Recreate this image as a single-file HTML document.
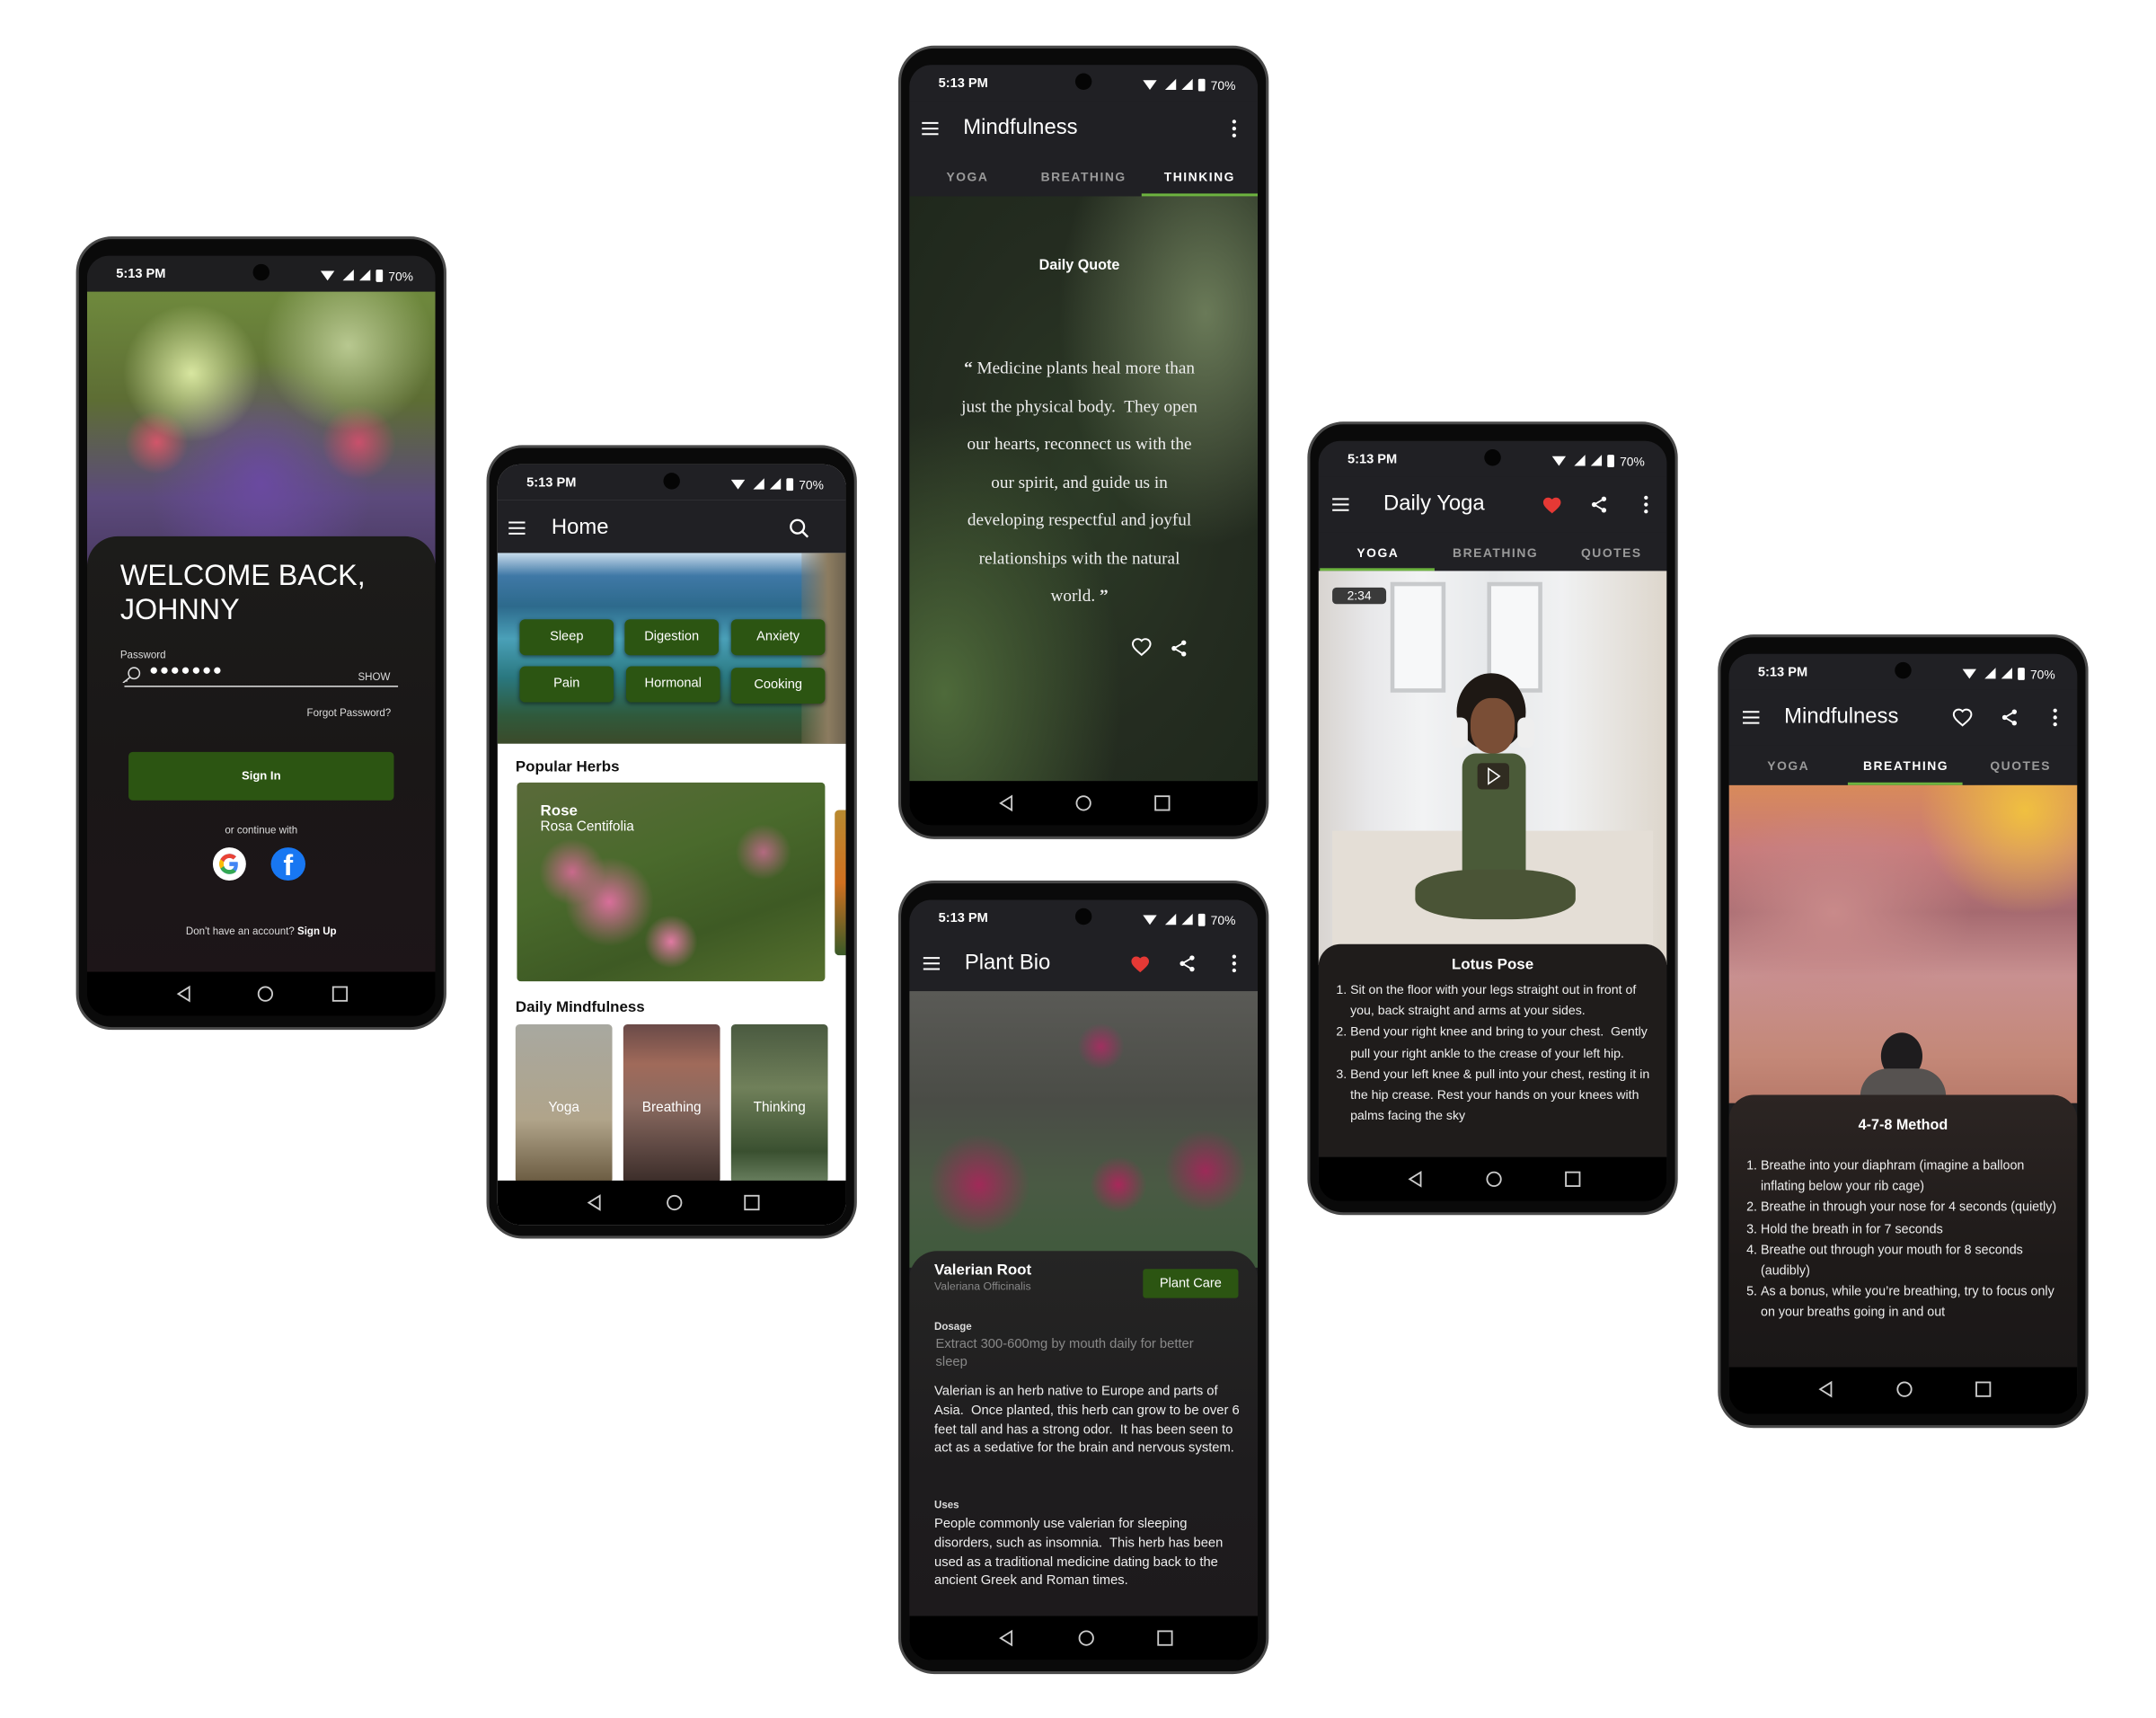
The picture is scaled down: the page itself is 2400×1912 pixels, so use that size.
<!DOCTYPE html>
<html><head><meta charset="utf-8">
<style>
*{margin:0;padding:0;box-sizing:border-box}
html,body{width:2400px;height:1912px;background:#fff;overflow:hidden;font-family:"Liberation Sans",sans-serif}
#w{position:absolute;left:0;top:0;width:1560px;height:1243px;transform:scale(1.53846);transform-origin:0 0}
.ph{position:absolute;width:268px;height:574px;background:#0a0a0a;border:2px solid #4a4a4a;border-radius:26px}
.sc{position:absolute;left:6px;right:6px;top:12px;bottom:8px;border-radius:16px;overflow:hidden;background:#1e1e21;color:#fff}
.sb{position:absolute;left:0;top:0;width:252px;height:26px;background:#202024}
.sb b{position:absolute;left:21px;top:8px;font-size:9.5px;font-weight:bold}
.cam{position:absolute;left:120px;top:6px;width:12px;height:12px;border-radius:50%;background:#050505}
.si{position:absolute;right:9px;top:7px}
.nav{position:absolute;left:0;bottom:0;width:252px;height:32px;background:#000}
.nav svg{position:absolute;left:0;top:0}
.ab{position:absolute;left:0;top:26px;width:252px;height:40px;background:#202024}
.ab .t{position:absolute;top:11px;font-size:15.5px;color:#fff}
.ab svg{position:absolute}
.tabs{position:absolute;left:0;top:66px;width:252px;height:29px;background:#202024;font-size:9px;letter-spacing:1px;color:#9a9a9a;font-weight:bold}
.tabs span{position:absolute;top:10px;transform:translateX(-50%)}
.tabs .on{color:#fff}
.ul{position:absolute;bottom:0;height:2px;width:84px;background:#6db33f}
.abs{position:absolute}
.btn{position:absolute;width:68px;height:26px;background:#2c5512;border-radius:4px;color:#fff;font-size:9.5px;text-align:center;line-height:26px;box-shadow:0 1px 3px rgba(0,0,0,.5)}
ol{position:absolute;padding-left:20px;color:#eee}
</style></head><body><div id="w">

<!-- PHONE 1 LOGIN -->
<div class="ph" style="left:55px;top:171px">
<div class="sc" style="background:#161315">
<div class="abs" style="left:0;top:25px;width:252px;height:200px;background:radial-gradient(circle at 30% 30%,#d8e6a0 0,transparent 22%),radial-gradient(circle at 75% 20%,#b8c890 0,transparent 25%),radial-gradient(circle at 20% 55%,#d2566a 0,transparent 10%),radial-gradient(circle at 78% 55%,#c9506c 0,transparent 12%),radial-gradient(ellipse at 50% 70%,#6a4aa0 0,transparent 45%),linear-gradient(180deg,#6f8a3d 0%,#5d6d34 40%,#5c4a7c 75%,#4a3a63 100%)"></div>
<div class="abs" style="left:0;top:203px;width:252px;height:320px;border-radius:22px 22px 0 0;background:linear-gradient(180deg,#1c1c1a 0%,#1a1717 50%,#1d1518 100%)"></div>
<div class="sb" style="background:#1e1e20"><b>5:13 PM</b><i class="cam"></i><span class="si"><svg width="76" height="11"><path d="M2 2h10l-5 7z" fill="#fff"/><path d="M18 9l8-8v8z" fill="#fff"/><path d="M30 9l8-8v8z" fill="#fff"/><rect x="42" y="1" width="5" height="9" rx="1" fill="#fff"/><text x="51" y="9" font-size="9" fill="#fff" font-family="Liberation Sans">70%</text></svg></span></div>
<div class="abs" style="left:24px;top:219px;font-size:21px;line-height:25px;color:#fff">WELCOME BACK,<br>JOHNNY</div>
<div class="abs" style="left:24px;top:284px;font-size:7.5px;color:#ddd">Password</div>
<svg class="abs" style="left:24px;top:297px" width="16" height="12"><circle cx="10" cy="5" r="4" fill="none" stroke="#ddd" stroke-width="1"/><path d="M7 8l-5 4M4 10l1 1" stroke="#ddd" stroke-width="1"/></svg>
<div class="abs" style="left:45px;top:294px;font-size:11px;letter-spacing:1px;color:#fff">●●●●●●●</div>
<div class="abs" style="left:196px;top:300px;font-size:7.5px;color:#ddd">SHOW</div>
<div class="abs" style="left:27px;top:311px;width:198px;height:1px;background:#ddd"></div>
<div class="abs" style="left:159px;top:326px;font-size:7.5px;color:#ddd">Forgot Password?</div>
<div class="abs" style="left:30px;top:359px;width:192px;height:35px;border-radius:3px;background:#2c5512;color:#fff;font-size:8.5px;font-weight:bold;text-align:center;line-height:35px">Sign In</div>
<div class="abs" style="left:0;width:252px;top:411px;text-align:center;font-size:7.5px;color:#ddd">or continue with</div>
<div class="abs" style="left:91px;top:428px;width:24px;height:24px;border-radius:50%;background:#fff"><svg width="24" height="24" viewBox="0 0 24 24"><path d="M18 10.5h-6v3h3.4c-.5 1.8-1.8 2.8-3.4 2.8a4.3 4.3 0 010-8.6c1.1 0 2 .4 2.8 1l2.1-2.1A7.3 7.3 0 0012 4.7a7.3 7.3 0 100 14.6c4 0 6.8-2.9 6-8.8z" fill="#4285f4"/><path d="M5.5 8.6l2.5 1.9A4.3 4.3 0 0112 7.7c1.1 0 2 .4 2.8 1l2.1-2.1A7.3 7.3 0 005.5 8.6z" fill="#ea4335"/><path d="M5.5 15.4A7.3 7.3 0 0012 19.3c1.9 0 3.6-.6 4.9-1.8l-2.3-1.9c-.7.5-1.6.7-2.6.7a4.3 4.3 0 01-4-2.7z" fill="#34a853"/><path d="M5.5 8.6a7.3 7.3 0 000 6.8L8 13.5a4.3 4.3 0 010-3z" fill="#fbbc05"/></svg></div>
<div class="abs" style="left:133px;top:428px;width:25px;height:24px;border-radius:50%;background:#1877f2;color:#fff;font-weight:bold;font-size:21px;text-align:center;line-height:28px;overflow:hidden">f</div>
<div class="abs" style="left:0;width:252px;top:484px;text-align:center;font-size:7.5px;color:#ddd">Don't have an account? <b style="color:#fff">Sign Up</b></div>
<div class="nav"><svg width="252" height="32"><path d="M74 11v10l-8-5z" fill="none" stroke="#ccc" stroke-width="1.2"/><circle cx="129" cy="16" r="5" fill="none" stroke="#ccc" stroke-width="1.2"/><rect x="178" y="11" width="10" height="10" fill="none" stroke="#ccc" stroke-width="1.2"/></svg></div>
</div></div>

<!-- PHONE 2 HOME -->
<div class="ph" style="left:352px;top:322px">
<div class="sc" style="background:#fff">
<div class="sb"><b>5:13 PM</b><i class="cam"></i><span class="si"><svg width="76" height="11"><path d="M2 2h10l-5 7z" fill="#fff"/><path d="M18 9l8-8v8z" fill="#fff"/><path d="M30 9l8-8v8z" fill="#fff"/><rect x="42" y="1" width="5" height="9" rx="1" fill="#fff"/><text x="51" y="9" font-size="9" fill="#fff" font-family="Liberation Sans">70%</text></svg></span></div>
<div class="ab"><svg style="left:8px;top:14px" width="12" height="12"><path d="M0 2h12M0 6h12M0 10h12" stroke="#fff" stroke-width="1.3"/></svg><span class="t" style="left:39px">Home</span><svg style="left:211px;top:13px" width="15" height="15"><circle cx="6" cy="6" r="4.8" fill="none" stroke="#fff" stroke-width="1.5"/><path d="M9.5 9.5l4 4" stroke="#fff" stroke-width="1.6"/></svg></div>
<div class="abs" style="left:0;top:64px;width:252px;height:138px;background:linear-gradient(180deg,#c8dcec 0%,#3f78a6 12%,#2d6a8c 28%,#4aa0b8 45%,#2a7880 65%,#2f5a3c 85%,#3b4a2a 100%)"></div>
<div class="abs" style="left:220px;top:64px;width:32px;height:138px;background:linear-gradient(90deg,rgba(140,120,90,.3),#8c7c60 60%,#6e6350)"></div>
<div class="btn" style="left:16px;top:112px">Sleep</div><div class="btn" style="left:92px;top:112px">Digestion</div><div class="btn" style="left:169px;top:112px">Anxiety</div>
<div class="btn" style="left:16px;top:146px">Pain</div><div class="btn" style="left:93px;top:146px">Hormonal</div><div class="btn" style="left:169px;top:147px">Cooking</div>
<div class="abs" style="left:13px;top:213px;font-size:11px;font-weight:bold;color:#111">Popular Herbs</div>
<div class="abs" style="left:14px;top:230px;width:223px;height:144px;border-radius:3px;background:radial-gradient(circle at 30% 60%,#d86f9a 0,transparent 18%),radial-gradient(circle at 50% 80%,#e07aa2 0,transparent 12%),radial-gradient(circle at 18% 45%,#c96a8c 0,transparent 12%),radial-gradient(circle at 80% 35%,#b36a80 0,transparent 10%),linear-gradient(160deg,#5a6a3a 0%,#4a6a2c 40%,#3e5a24 70%,#56702e 100%)"></div>
<div class="abs" style="left:31px;top:245px;font-size:11px;font-weight:bold;color:#fff">Rose</div>
<div class="abs" style="left:31px;top:257px;font-size:10px;color:#fff">Rosa Centifolia</div>
<div class="abs" style="left:244px;top:250px;width:8px;height:105px;border-radius:3px 0 0 3px;background:linear-gradient(180deg,#b88a30,#d07020 50%,#3a5a28)"></div>
<div class="abs" style="left:13px;top:387px;font-size:11px;font-weight:bold;color:#111">Daily Mindfulness</div>
<div class="abs" style="left:13px;top:405px;width:70px;height:115px;border-radius:3px;background:linear-gradient(180deg,#a8a8a0,#b0a48a 60%,#6a5a40)"></div>
<div class="abs" style="left:91px;top:405px;width:70px;height:115px;border-radius:3px;background:linear-gradient(180deg,#6a4a48,#a06a5a 25%,#8a6a60 50%,#5a4540 80%,#3a2c28)"></div>
<div class="abs" style="left:169px;top:405px;width:70px;height:115px;border-radius:3px;background:linear-gradient(180deg,#4a5a40,#70805a 40%,#3a5030 80%,#6a8060)"></div>
<div class="abs" style="left:13px;width:70px;top:460px;text-align:center;font-size:10px;color:#fff">Yoga</div>
<div class="abs" style="left:91px;width:70px;top:460px;text-align:center;font-size:10px;color:#fff">Breathing</div>
<div class="abs" style="left:169px;width:70px;top:460px;text-align:center;font-size:10px;color:#fff">Thinking</div>
<div class="nav"><svg width="252" height="32"><path d="M74 11v10l-8-5z" fill="none" stroke="#ccc" stroke-width="1.2"/><circle cx="128" cy="16" r="5" fill="none" stroke="#ccc" stroke-width="1.2"/><rect x="179" y="11" width="10" height="10" fill="none" stroke="#ccc" stroke-width="1.2"/></svg></div>
</div></div>

<!-- PHONE 3 QUOTE -->
<div class="ph" style="left:650px;top:33px">
<div class="sc">
<div class="sb"><b>5:13 PM</b><i class="cam"></i><span class="si"><svg width="76" height="11"><path d="M2 2h10l-5 7z" fill="#fff"/><path d="M18 9l8-8v8z" fill="#fff"/><path d="M30 9l8-8v8z" fill="#fff"/><rect x="42" y="1" width="5" height="9" rx="1" fill="#fff"/><text x="51" y="9" font-size="9" fill="#fff" font-family="Liberation Sans">70%</text></svg></span></div>
<div class="ab"><svg style="left:9px;top:14px" width="12" height="12"><path d="M0 2h12M0 6h12M0 10h12" stroke="#fff" stroke-width="1.3"/></svg><span class="t" style="left:39px">Mindfulness</span><svg style="left:232px;top:13px" width="6" height="14"><circle cx="3" cy="2" r="1.4" fill="#fff"/><circle cx="3" cy="7" r="1.4" fill="#fff"/><circle cx="3" cy="12" r="1.4" fill="#fff"/></svg></div>
<div class="tabs"><span style="left:42px">YOGA</span><span style="left:126px">BREATHING</span><span class="on" style="left:210px">THINKING</span><i class="ul" style="left:168px"></i></div>
<div class="abs" style="left:0;top:95px;width:252px;height:423px;background:radial-gradient(ellipse at 85% 20%,#6a7a58 0,transparent 35%),radial-gradient(ellipse at 10% 85%,#4e6a3a 0,transparent 40%),radial-gradient(ellipse at 50% 50%,#2c3a26 0,#242c20 60%,#1f281c 100%)"></div>
<div class="abs" style="left:0;width:246px;top:139px;text-align:center;font-size:10.5px;font-weight:bold;color:#fff">Daily Quote</div>
<div class="abs" style="left:34px;width:178px;top:206px;text-align:center;font-family:'Liberation Serif',serif;font-size:12.5px;line-height:27.5px;color:#eee"><b>“</b> Medicine plants heal more than just the physical body.&nbsp; They open our hearts, reconnect us with the our spirit, and guide us in developing respectful and joyful relationships with the natural world. <b>”</b></div>
<svg class="abs" style="left:160px;top:414px" width="16" height="14" viewBox="0 0 24 22"><path d="M12 20l-1.5-1.3C5 14 2 11 2 7.5 2 4.5 4.5 2 7.5 2c1.7 0 3.4.8 4.5 2.1C13.1 2.8 14.8 2 16.5 2 19.5 2 22 4.5 22 7.5c0 3.5-3 6.5-8.5 11.2z" fill="none" stroke="#fff" stroke-width="2"/></svg>
<svg class="abs" style="left:188px;top:415px" width="14" height="14" viewBox="0 0 24 24"><circle cx="18" cy="5" r="3" fill="#fff"/><circle cx="6" cy="12" r="3" fill="#fff"/><circle cx="18" cy="19" r="3" fill="#fff"/><path d="M18 5L6 12l12 7" stroke="#fff" stroke-width="2" fill="none"/></svg>
<div class="nav"><svg width="252" height="32"><path d="M74 11v10l-8-5z" fill="none" stroke="#ccc" stroke-width="1.2"/><circle cx="126" cy="16" r="5" fill="none" stroke="#ccc" stroke-width="1.2"/><rect x="178" y="11" width="10" height="10" fill="none" stroke="#ccc" stroke-width="1.2"/></svg></div>
</div></div>

<!-- PHONE 4 PLANT BIO -->
<div class="ph" style="left:650px;top:637px">
<div class="sc">
<div class="sb"><b>5:13 PM</b><i class="cam"></i><span class="si"><svg width="76" height="11"><path d="M2 2h10l-5 7z" fill="#fff"/><path d="M18 9l8-8v8z" fill="#fff"/><path d="M30 9l8-8v8z" fill="#fff"/><rect x="42" y="1" width="5" height="9" rx="1" fill="#fff"/><text x="51" y="9" font-size="9" fill="#fff" font-family="Liberation Sans">70%</text></svg></span></div>
<div class="ab"><svg style="left:10px;top:14px" width="12" height="12"><path d="M0 2h12M0 6h12M0 10h12" stroke="#fff" stroke-width="1.3"/></svg><span class="t" style="left:40px">Plant Bio</span>
<svg style="left:159px;top:13px" width="16" height="14" viewBox="0 0 24 22"><path d="M12 21l-1.5-1.3C5 15 2 12 2 8.5 2 5.5 4.5 3 7.5 3c1.7 0 3.4.8 4.5 2.1C13.1 3.8 14.8 3 16.5 3 19.5 3 22 5.5 22 8.5c0 3.5-3 6.5-8.5 11.2z" fill="#e53935"/></svg>
<svg style="left:194px;top:13px" width="14" height="14" viewBox="0 0 24 24"><circle cx="18" cy="5" r="3" fill="#fff"/><circle cx="6" cy="12" r="3" fill="#fff"/><circle cx="18" cy="19" r="3" fill="#fff"/><path d="M18 5L6 12l12 7" stroke="#fff" stroke-width="2" fill="none"/></svg>
<svg style="left:232px;top:13px" width="6" height="14"><circle cx="3" cy="2" r="1.4" fill="#fff"/><circle cx="3" cy="7" r="1.4" fill="#fff"/><circle cx="3" cy="12" r="1.4" fill="#fff"/></svg></div>
<div class="abs" style="left:0;top:66px;width:252px;height:200px;background:radial-gradient(circle at 60% 70%,#a8285a 0,transparent 10%),radial-gradient(circle at 20% 70%,#a02a58 0,transparent 15%),radial-gradient(circle at 85% 65%,#9c2a58 0,transparent 12%),radial-gradient(circle at 55% 20%,#a03060 0,transparent 8%),linear-gradient(180deg,#5a5a56 0%,#4a4c46 40%,#4a5a44 70%,#3f5a3c 100%)"></div>
<div class="abs" style="left:0;top:254px;width:252px;height:270px;border-radius:20px 20px 0 0;background:linear-gradient(180deg,#252524,#1e1c1e 60%,#1d1a1c)"></div>
<div class="abs" style="left:18px;top:262px;font-size:11px;font-weight:bold">Valerian Root</div>
<div class="abs" style="left:18px;top:275px;font-size:8px;color:#888">Valeriana Officinalis</div>
<div class="abs" style="left:169px;top:267px;width:69px;height:21px;border-radius:2px;background:#2c5512;font-size:9.5px;text-align:center;line-height:21px">Plant Care</div>
<div class="abs" style="left:18px;top:304px;font-size:7.5px;font-weight:bold;color:#ddd">Dosage</div>
<div class="abs" style="left:19px;top:315px;width:200px;font-size:9.6px;line-height:13px;color:#888">Extract 300-600mg by mouth daily for better sleep</div>
<div class="abs" style="left:18px;top:349px;width:226px;font-size:9.6px;line-height:13.8px;color:#eee">Valerian is an herb native to Europe and parts of Asia.&nbsp; Once planted, this herb can grow to be over 6 feet tall and has a strong odor.&nbsp; It has been seen to act as a sedative for the brain and nervous system.</div>
<div class="abs" style="left:18px;top:433px;font-size:7.5px;font-weight:bold;color:#ddd">Uses</div>
<div class="abs" style="left:18px;top:445px;width:226px;font-size:9.6px;line-height:13.8px;color:#eee">People commonly use valerian for sleeping disorders, such as insomnia.&nbsp; This herb has been used as a traditional medicine dating back to the ancient Greek and Roman times.</div>
<div class="nav"><svg width="252" height="32"><path d="M74 11v10l-8-5z" fill="none" stroke="#ccc" stroke-width="1.2"/><circle cx="128" cy="16" r="5" fill="none" stroke="#ccc" stroke-width="1.2"/><rect x="180" y="11" width="10" height="10" fill="none" stroke="#ccc" stroke-width="1.2"/></svg></div>
</div></div>

<!-- PHONE 5 DAILY YOGA -->
<div class="ph" style="left:946px;top:305px">
<div class="sc">
<div class="sb"><b>5:13 PM</b><i class="cam"></i><span class="si"><svg width="76" height="11"><path d="M2 2h10l-5 7z" fill="#fff"/><path d="M18 9l8-8v8z" fill="#fff"/><path d="M30 9l8-8v8z" fill="#fff"/><rect x="42" y="1" width="5" height="9" rx="1" fill="#fff"/><text x="51" y="9" font-size="9" fill="#fff" font-family="Liberation Sans">70%</text></svg></span></div>
<div class="ab"><svg style="left:10px;top:14px" width="12" height="12"><path d="M0 2h12M0 6h12M0 10h12" stroke="#fff" stroke-width="1.3"/></svg><span class="t" style="left:47px">Daily Yoga</span>
<svg style="left:161px;top:13px" width="16" height="14" viewBox="0 0 24 22"><path d="M12 21l-1.5-1.3C5 15 2 12 2 8.5 2 5.5 4.5 3 7.5 3c1.7 0 3.4.8 4.5 2.1C13.1 3.8 14.8 3 16.5 3 19.5 3 22 5.5 22 8.5c0 3.5-3 6.5-8.5 11.2z" fill="#e53935"/></svg>
<svg style="left:196px;top:13px" width="14" height="14" viewBox="0 0 24 24"><circle cx="18" cy="5" r="3" fill="#fff"/><circle cx="6" cy="12" r="3" fill="#fff"/><circle cx="18" cy="19" r="3" fill="#fff"/><path d="M18 5L6 12l12 7" stroke="#fff" stroke-width="2" fill="none"/></svg>
<svg style="left:234px;top:13px" width="6" height="14"><circle cx="3" cy="2" r="1.4" fill="#fff"/><circle cx="3" cy="7" r="1.4" fill="#fff"/><circle cx="3" cy="12" r="1.4" fill="#fff"/></svg></div>
<div class="tabs" style="height:28px"><span class="on" style="left:43px">YOGA</span><span style="left:128px">BREATHING</span><span style="left:212px">QUOTES</span><i class="ul" style="left:1px;width:83px"></i></div>
<div class="abs" style="left:0;top:94px;width:252px;height:285px;background:linear-gradient(90deg,#d8d4d0 0%,#e8e8ea 15%,#f2f3f4 30%,#e6e8ea 50%,#f0f1f2 70%,#ddd6cc 100%)"></div>
<div class="abs" style="left:52px;top:102px;width:40px;height:80px;background:#f7f8f9;border:3px solid #c8cacc"></div>
<div class="abs" style="left:122px;top:102px;width:40px;height:80px;background:#f7f8f9;border:3px solid #c8cacc"></div>
<div class="abs" style="left:10px;top:282px;width:232px;height:90px;background:#e4ded6"></div>
<div class="abs" style="left:100px;top:168px;width:50px;height:56px;border-radius:50%;background:#1e1814"></div>
<div class="abs" style="left:110px;top:186px;width:32px;height:40px;border-radius:45%;background:#7a4e36"></div>
<div class="abs" style="left:96px;top:200px;width:12px;height:22px;border-radius:5px;background:#eee"></div>
<div class="abs" style="left:144px;top:200px;width:12px;height:22px;border-radius:5px;background:#eee"></div>
<div class="abs" style="left:104px;top:226px;width:46px;height:90px;border-radius:10px 10px 4px 4px;background:#4a5a38"></div>
<div class="abs" style="left:70px;top:310px;width:116px;height:36px;border-radius:40%;background:#4a5436"></div>
<div class="abs" style="left:10px;top:106px;width:39px;height:12px;border-radius:3px;background:#3a3a3a;font-size:9px;text-align:center;line-height:12px">2:34</div>
<div class="abs" style="left:115px;top:233px;width:23px;height:19px;border-radius:3px;background:rgba(40,30,25,.75)"><svg width="23" height="19"><path d="M8 4v11l8-5.5z" fill="none" stroke="#fff" stroke-width="1"/></svg></div>
<div class="abs" style="left:0;top:364px;width:252px;height:160px;border-radius:16px 16px 0 0;background:#1f1c1b"></div>
<div class="abs" style="left:0;width:252px;top:373px;text-align:center;font-size:11px;font-weight:bold">Lotus Pose</div>
<ol style="left:3px;top:390px;width:244px;font-size:9.2px;line-height:15.2px"><li>Sit on the floor with your legs straight out in front of you, back straight and arms at your sides.</li><li>Bend your right knee and bring to your chest.&nbsp; Gently pull your right ankle to the crease of your left hip.</li><li>Bend your left knee &amp; pull into your chest, resting it in the hip crease. Rest your hands on your knees with palms facing the sky</li></ol>
<div class="nav"><svg width="252" height="32"><path d="M74 11v10l-8-5z" fill="none" stroke="#ccc" stroke-width="1.2"/><circle cx="127" cy="16" r="5" fill="none" stroke="#ccc" stroke-width="1.2"/><rect x="179" y="11" width="10" height="10" fill="none" stroke="#ccc" stroke-width="1.2"/></svg></div>
</div></div>

<!-- PHONE 6 BREATHING -->
<div class="ph" style="left:1243px;top:459px">
<div class="sc">
<div class="sb"><b>5:13 PM</b><i class="cam"></i><span class="si"><svg width="76" height="11"><path d="M2 2h10l-5 7z" fill="#fff"/><path d="M18 9l8-8v8z" fill="#fff"/><path d="M30 9l8-8v8z" fill="#fff"/><rect x="42" y="1" width="5" height="9" rx="1" fill="#fff"/><text x="51" y="9" font-size="9" fill="#fff" font-family="Liberation Sans">70%</text></svg></span></div>
<div class="ab"><svg style="left:10px;top:14px" width="12" height="12"><path d="M0 2h12M0 6h12M0 10h12" stroke="#fff" stroke-width="1.3"/></svg><span class="t" style="left:40px">Mindfulness</span>
<svg style="left:161px;top:13px" width="16" height="14" viewBox="0 0 24 22"><path d="M12 20l-1.5-1.3C5 14 2 11 2 7.5 2 4.5 4.5 2 7.5 2c1.7 0 3.4.8 4.5 2.1C13.1 2.8 14.8 2 16.5 2 19.5 2 22 4.5 22 7.5c0 3.5-3 6.5-8.5 11.2z" fill="none" stroke="#fff" stroke-width="2"/></svg>
<svg style="left:196px;top:13px" width="14" height="14" viewBox="0 0 24 24"><circle cx="18" cy="5" r="3" fill="#fff"/><circle cx="6" cy="12" r="3" fill="#fff"/><circle cx="18" cy="19" r="3" fill="#fff"/><path d="M18 5L6 12l12 7" stroke="#fff" stroke-width="2" fill="none"/></svg>
<svg style="left:233px;top:13px" width="6" height="14"><circle cx="3" cy="2" r="1.4" fill="#fff"/><circle cx="3" cy="7" r="1.4" fill="#fff"/><circle cx="3" cy="12" r="1.4" fill="#fff"/></svg></div>
<div class="tabs"><span style="left:43px">YOGA</span><span class="on" style="left:128px">BREATHING</span><span style="left:211px">QUOTES</span><i class="ul" style="left:86px;width:83px"></i></div>
<div class="abs" style="left:0;top:95px;width:252px;height:230px;background:radial-gradient(ellipse at 85% 8%,#f0c040 0,transparent 25%),radial-gradient(ellipse at 30% 40%,#c98a8a 0,transparent 40%),linear-gradient(180deg,#d88a5a 0%,#c87a7a 20%,#a66a70 40%,#c89090 60%,#c48878 85%,#b87a6a 100%)"></div>
<div class="abs" style="left:110px;top:274px;width:30px;height:34px;border-radius:50%;background:#1e1c1e"></div>
<div class="abs" style="left:95px;top:300px;width:62px;height:30px;border-radius:20px 20px 0 0;background:#565250"></div>
<div class="abs" style="left:0;top:319px;width:252px;height:200px;border-radius:18px 18px 0 0;background:linear-gradient(180deg,#2c2523,#1e1a19 60%,#1a1717)"></div>
<div class="abs" style="left:0;width:252px;top:335px;text-align:center;font-size:10.5px;font-weight:bold">4-7-8 Method</div>
<ol style="left:3px;top:363px;width:244px;font-size:9.3px;line-height:15.2px"><li>Breathe into your diaphram (imagine a balloon inflating below your rib cage)</li><li>Breathe in through your nose for 4 seconds (quietly)</li><li>Hold the breath in for 7 seconds</li><li>Breathe out through your mouth for 8 seconds (audibly)</li><li>As a bonus, while you’re breathing, try to focus only on your breaths going in and out</li></ol>
<div class="nav" style="height:34px"><svg width="252" height="32"><path d="M74 11v10l-8-5z" fill="none" stroke="#ccc" stroke-width="1.2"/><circle cx="127" cy="16" r="5" fill="none" stroke="#ccc" stroke-width="1.2"/><rect x="179" y="11" width="10" height="10" fill="none" stroke="#ccc" stroke-width="1.2"/></svg></div>
</div></div>

</div></body></html>
